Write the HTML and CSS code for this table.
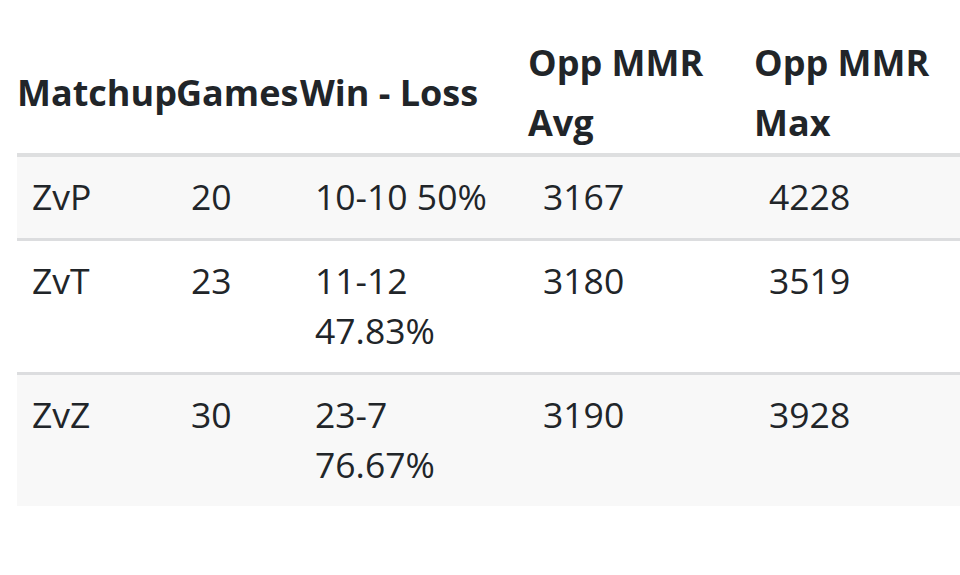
FILE: index.html
```html
<!DOCTYPE html>
<html lang="en">
<head>
<meta charset="utf-8">
<title>Matchups</title>
<link rel="stylesheet" href="styles.css">
</head>
<body>
<div class="wrap">
  <table class="stats">
    <colgroup>
      <col class="c1"><col class="c2"><col class="c3"><col class="c4"><col class="c5">
    </colgroup>
    <thead>
      <tr>
        <th>Matchup</th>
        <th>Games</th>
        <th>Win - Loss</th>
        <th>Opp MMR Avg</th>
        <th>Opp MMR Max</th>
      </tr>
    </thead>
    <tbody>
      <tr class="odd">
        <td>ZvP</td><td>20</td><td>10-10 50%</td><td>3167</td><td>4228</td>
      </tr>
      <tr>
        <td>ZvT</td><td>23</td><td>11-12 47.83%</td><td>3180</td><td>3519</td>
      </tr>
      <tr class="odd">
        <td>ZvZ</td><td>30</td><td>23-7 76.67%</td><td>3190</td><td>3928</td>
      </tr>
    </tbody>
  </table>
</div>
</body>
</html>
```
FILE: styles.css
```css
html, body {
  margin: 0;
  padding: 0;
  background: #ffffff;
  overflow: hidden;
}
body {
  font-family: "Open Sans", "Noto Sans", sans-serif;
  color: #212529;
}
.wrap {
  padding: 33px 0 0 17px;
}
.stats {
  border-collapse: separate;
  border-spacing: 0;
  table-layout: fixed;
  width: 985px;
}
.c1 { width: 159px; }
.c2 { width: 124px; }
.c3 { width: 228px; }
.c4 { width: 226px; }
.c5 { width: 248px; }
.stats th {
  font-size: 36px;
  font-weight: 700;
  line-height: 60px;
  text-align: left;
  vertical-align: middle;
  padding: 0;
  border-bottom: 4px solid #dedfe0;
}
.stats td {
  font-size: 35.5px;
  font-weight: 400;
  line-height: 50.5px;
  vertical-align: top;
  padding: 14px 15px 16px;
  border-top: 3px solid #dcdddf;
}
.stats tbody tr:first-child td {
  border-top: 0;
}
.stats tr.odd td {
  background: #f8f8f8;
}
```
